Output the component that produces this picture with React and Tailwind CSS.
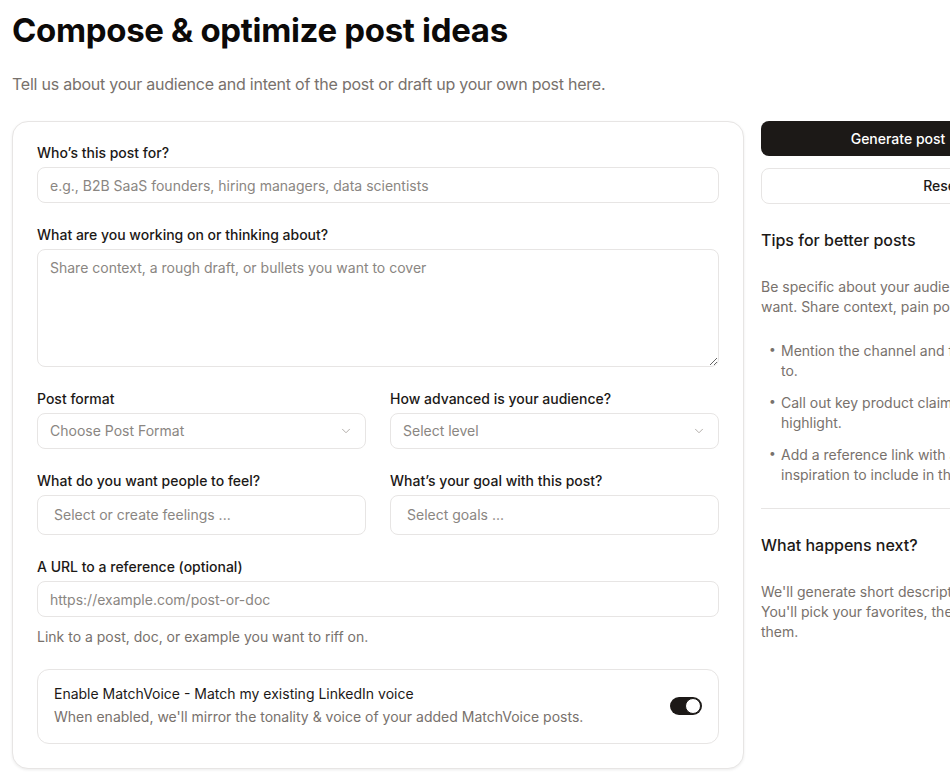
import { ChevronDown, ArrowRight } from 'lucide-react';

const Label = ({ children }) => (
  <label className="mb-1 block text-sm leading-5 font-medium text-[#1c1917]">{children}</label>
);

const inputBase =
  'w-full rounded-lg border border-[#e7e5e4] bg-white px-3 text-sm text-[#1c1917] placeholder:text-[#8a8682] outline-none';

const Select = ({ placeholder }) => (
  <div className="flex h-9 w-full items-center justify-between rounded-lg border border-[#e7e5e4] bg-white px-3 text-sm text-[#8a8682]">
    <span>{placeholder}</span>
    <ChevronDown size={14} className="text-[#a8a29e]" strokeWidth={1.5} />
  </div>
);

const tips = [
  ['Mention the channel and format you are posting', 'to.'],
  ['Call out key product claims or proof points to', 'highlight.'],
  ['Add a reference link with an example for', 'inspiration to include in the post.'],
];

export default function App() {
  return (
    <div className="min-h-screen w-[950px] overflow-hidden bg-white font-['Inter',sans-serif] text-[#1c1917]">
      <div className="w-[1100px] px-3 pt-[10px]">
        <h1 className="text-[33px] leading-10 font-bold tracking-[-0.01em] text-[#0c0a09]">
          Compose &amp; optimize post ideas
        </h1>
        <p className="mt-[22px] text-base leading-6 tracking-[-0.015em] text-[#78716c]">
          Tell us about your audience and intent of the post or draft up your own post here.
        </p>

        <div className="mt-[25px] flex gap-[17px]">
          {/* form card */}
          <div className="w-[732px] shrink-0 rounded-2xl border border-[#e7e5e4] bg-white px-6 pt-[21px] pb-6 shadow-[0_1px_3px_rgba(0,0,0,0.08)]">
            <div className="flex flex-col gap-[22px]">
              <div>
                <Label>Who’s this post for?</Label>
                <input className={`${inputBase} h-9`} placeholder="e.g., B2B SaaS founders, hiring managers, data scientists" />
              </div>
              <div>
                <Label>What are you working on or thinking about?</Label>
                <textarea
                  className={`${inputBase} block h-[118px] resize-y py-2 leading-5`}
                  placeholder="Share context, a rough draft, or bullets you want to cover"
                />
              </div>
              <div className="grid grid-cols-2 gap-x-6 gap-y-[22px]">
                <div>
                  <Label>Post format</Label>
                  <Select placeholder="Choose Post Format" />
                </div>
                <div>
                  <Label>How advanced is your audience?</Label>
                  <Select placeholder="Select level" />
                </div>
                <div>
                  <Label>What do you want people to feel?</Label>
                  <div className="flex h-10 items-center rounded-lg border border-[#e7e5e4] px-4 text-sm text-[#8a8682]">
                    Select or create feelings ...
                  </div>
                </div>
                <div>
                  <Label>What’s your goal with this post?</Label>
                  <div className="flex h-10 items-center rounded-lg border border-[#e7e5e4] px-4 text-sm text-[#8a8682]">
                    Select goals ...
                  </div>
                </div>
              </div>
              <div>
                <Label>A URL to a reference (optional)</Label>
                <input className={`${inputBase} h-9`} placeholder="https://example.com/post-or-doc" />
                <p className="mt-[10px] text-sm leading-5 text-[#78716c]">
                  Link to a post, doc, or example you want to riff on.
                </p>
                <div className="mt-[22px] flex items-center justify-between rounded-xl border border-[#e7e5e4] px-4 pt-[14px] pb-[16px]">
                  <div>
                    <p className="text-sm leading-5 text-[#1c1917]">
                      Enable MatchVoice - Match my existing LinkedIn voice
                    </p>
                    <p className="mt-[3px] text-sm leading-5 text-[#78716c]">
                      When enabled, we'll mirror the tonality &amp; voice of your added MatchVoice posts.
                    </p>
                  </div>
                  <div className="flex h-[18px] w-8 items-center justify-end rounded-full bg-[#1c1917] px-px">
                    <span className="h-4 w-4 rounded-full border border-[#1c1917] bg-white" />
                  </div>
                </div>
              </div>
            </div>
          </div>

          {/* side column */}
          <div className="w-[360px] shrink-0">
            <button className="flex h-[35px] w-full items-center justify-center gap-2 rounded-lg bg-[#1c1917] pr-[6px] text-sm font-medium text-white">
              Generate post
              <ArrowRight size={16} />
              <span className="w-[48px]" />
            </button>
            <button className="mt-3 flex h-9 w-full items-center justify-center rounded-lg border border-[#e7e5e4] bg-white pl-[2px] text-sm font-medium text-[#1c1917]">
              Reset
            </button>

            <h2 className="mt-6 text-base leading-6 font-medium text-[#1c1917]">Tips for better posts</h2>
            <p className="mt-[25px] whitespace-nowrap text-sm leading-5 text-[#78716c]">
              Be specific about your audience and the outcome you
              <br />
              want. Share context, pain points, and proof.
            </p>
            <ul className="mt-6 flex flex-col gap-3 pl-[8px] text-sm leading-5 text-[#78716c]">
              {tips.map(([a, b]) => (
                <li key={a} className="flex">
                  <span className="w-[12px] shrink-0 text-xs">•</span>
                  <span className="whitespace-nowrap">
                    {a}
                    <br />
                    {b}
                  </span>
                </li>
              ))}
            </ul>
            <div className="mt-[23px] border-t border-[#e7e5e4]" />
            <h2 className="mt-6 text-base leading-6 font-medium text-[#1c1917]">What happens next?</h2>
            <p className="mt-[25px] whitespace-nowrap text-sm leading-5 text-[#78716c]">
              We'll generate short descriptions of a few ideas.
              <br />
              You'll pick your favorites, then we'll draft
              <br />
              them.
            </p>
          </div>
        </div>
      </div>
    </div>
  );
}
